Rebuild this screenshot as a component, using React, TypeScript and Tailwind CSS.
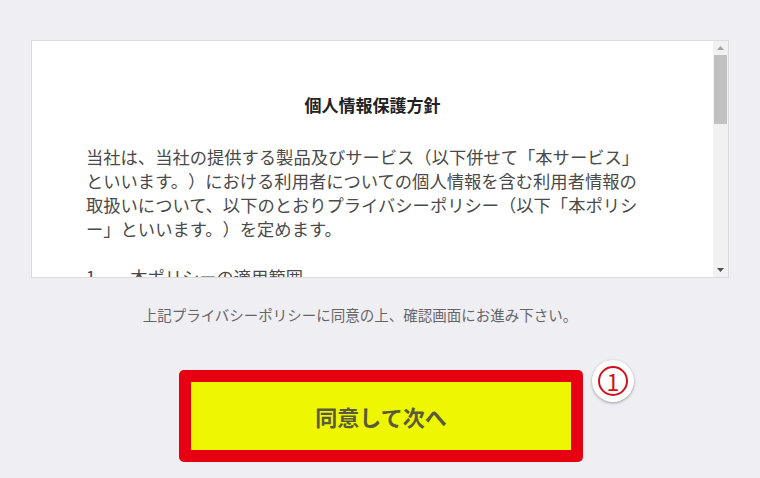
const FONT = '"Noto Sans CJK JP", "Noto Sans", sans-serif'

// ── Scrollbar (fake, static) ───────────────────────────────────────────────

function Scrollbar() {
  return (
    <div className="w-[15px] shrink-0 bg-[#f1f1f1] flex flex-col">
      <div className="h-[14px] flex items-center justify-center">
        <svg width="7" height="4" viewBox="0 0 7 4" aria-hidden="true">
          <path d="M0 4 L3.5 0 L7 4 Z" fill="#a3a3a3" />
        </svg>
      </div>
      <div className="h-[69px] mx-[1px] bg-[#c1c1c1]" />
      <div className="flex-1" />
      <div className="h-[14px] flex items-center justify-center">
        <svg width="7" height="4" viewBox="0 0 7 4" aria-hidden="true">
          <path d="M0 0 L7 0 L3.5 4 Z" fill="#505050" />
        </svg>
      </div>
    </div>
  )
}

// ── Policy box ─────────────────────────────────────────────────────────────

function PolicyBox() {
  return (
    <div className="mt-[40px] ml-[31px] w-[698px] h-[238px] bg-white border border-[#dcdcdc] flex">
      <div className="flex-1 overflow-hidden pt-[52px] pl-[54px]">
        <h1 className="text-[17px] font-bold leading-[24px] text-[#222] text-center -ml-[54px]">
          個人情報保護方針
        </h1>
        <div className="mt-[28px] w-[560px] text-[17.3px] leading-[24px] text-[#4a4a4a] [text-spacing-trim:space-all] [line-break:anywhere]">
          <p>
            当社は、当社の提供する製品及びサービス（以下併せて「本サービス」といいます。）における利用者についての個人情報を含む利用者情報の取扱いについて、以下のとおりプライバシーポリシー（以下「本ポリシー」といいます。）を定めます。
          </p>
          <p className="mt-[24px]">1．　本ポリシーの適用範囲</p>
        </div>
      </div>
      <Scrollbar />
    </div>
  )
}

// ── App ────────────────────────────────────────────────────────────────────

export default function App() {
  return (
    <div
      className="w-[760px] h-[478px] bg-[#efeef3] overflow-hidden flex flex-col"
      style={{ fontFamily: FONT }}
    >
      <PolicyBox />

      {/* Notice */}
      <div className="mt-[27px] flex justify-center pr-[40px]">
        <p className="text-[14.5px] leading-[20px] text-[#666] [text-spacing-trim:space-all]">
          上記プライバシーポリシーに同意の上、確認画面にお進み下さい。
        </p>
      </div>

      {/* Agree button with step badge */}
      <div className="mt-[45px] ml-[179px] relative w-[404px]">
        <button
          type="button"
          className="w-[404px] h-[92px] border-[12px] border-[#e60012] rounded-[5px] bg-[#eef700] text-[22px] font-bold text-[#5a5a3c] flex items-center justify-center"
        >
          同意して次へ
        </button>
        <div className="absolute left-[413px] -top-[10px] w-[42px] h-[42px] rounded-full bg-white shadow-[0_1px_3px_rgba(0,0,0,0.35)] flex items-center justify-center">
          <div className="w-[30px] h-[30px] rounded-full border-2 border-[#d0101a] flex items-center justify-center text-[23px] leading-none text-[#d0101a]">
            1
          </div>
        </div>
      </div>
    </div>
  )
}
